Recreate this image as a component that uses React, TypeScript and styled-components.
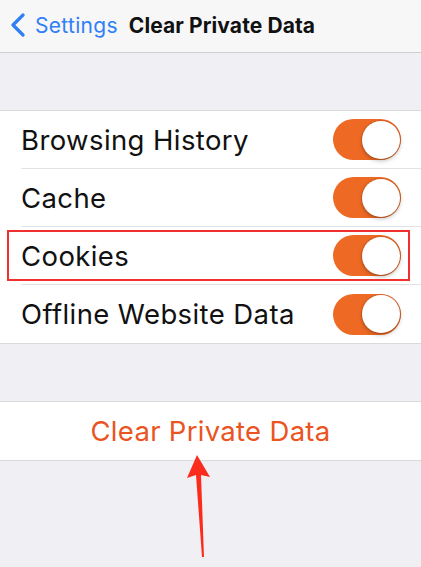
import styled, { createGlobalStyle } from "styled-components";

const GlobalStyle = createGlobalStyle`
  html, body {
    margin: 0;
    padding: 0;
    background: #efeff4;
  }
  body {
    font-family: Inter, "Liberation Sans", Arial, sans-serif;
    -webkit-font-smoothing: antialiased;
  }
`;

const Page = styled.div`
  position: relative;
  width: 421px;
  height: 567px;
  overflow: hidden;
  display: flex;
  flex-direction: column;
  background: #efeff4;
`;

const NavBar = styled.div`
  height: 53px;
  box-sizing: border-box;
  display: flex;
  align-items: center;
  gap: 11px;
  padding: 0 0 2px 10px;
  background: #f7f7f8;
  border-bottom: 1px solid #cfcfd3;
`;

const BackLink = styled.div`
  display: flex;
  align-items: center;
  gap: 9px;
  color: #2f7ff6;
  font-size: 21px;
  letter-spacing: 0.3px;
`;

const Title = styled.div`
  color: #111;
  font-size: 21px;
  font-weight: 700;
  letter-spacing: 0.1px;
`;

const Spacer = styled.div`
  height: 57px;
`;

const Group = styled.div`
  background: #fff;
  border-top: 1px solid #dadadd;
  border-bottom: 1px solid #dadadd;
`;

const Row = styled.div<{ $last?: boolean; $marked?: boolean }>`
  position: relative;
  height: 58px;
  box-sizing: border-box;
  margin-left: 21px;
  padding-right: 20px;
  display: flex;
  align-items: center;
  justify-content: space-between;
  border-bottom: ${(p) => (p.$last ? "none" : "1px solid #e2e2e5")};
  &::after {
    content: "";
    display: ${(p) => (p.$marked ? "block" : "none")};
    position: absolute;
    left: -14px;
    right: 11px;
    top: 3px;
    bottom: 3px;
    border: 2px solid #f0302f;
  }
`;

const Label = styled.span`
  color: #111;
  font-size: 27.5px;
  letter-spacing: 0.4px;
`;

const Switch = styled.div`
  width: 68px;
  height: 41px;
  border-radius: 21px;
  background: #ee6a24;
  display: flex;
  align-items: center;
  justify-content: flex-end;
  padding: 0 1px;
  box-sizing: border-box;
`;

const Knob = styled.div`
  width: 38px;
  height: 38px;
  border-radius: 50%;
  background: #fff;
  box-shadow: 0 2px 4px rgba(0, 0, 0, 0.25), 0 0 0 1px rgba(200, 90, 30, 0.5);
`;

const ActionRow = styled.div`
  height: 58px;
  display: flex;
  align-items: center;
  justify-content: center;
  color: #ea541f;
  font-size: 27.5px;
  letter-spacing: 0.3px;
`;

const ArrowMark = styled.svg`
  position: absolute;
  left: 0;
  top: 0;
  pointer-events: none;
`;

const items = ["Browsing History", "Cache", "Cookies", "Offline Website Data"];

export default function App() {
  return (
    <>
      <GlobalStyle />
      <Page>
        <NavBar>
          <BackLink>
            <svg width="16" height="24" viewBox="0 0 16 24">
              <path
                d="M13 2 L3 12 L13 22"
                fill="none"
                stroke="#2f7ff6"
                strokeWidth="3.2"
                strokeLinecap="round"
                strokeLinejoin="round"
              />
            </svg>
            Settings
          </BackLink>
          <Title>Clear Private Data</Title>
        </NavBar>
        <Spacer />
        <Group>
          {items.map((name, i) => (
            <Row key={name} $last={i === items.length - 1} $marked={name === "Cookies"}>
              <Label>{name}</Label>
              <Switch>
                <Knob />
              </Switch>
            </Row>
          ))}
        </Group>
        <Spacer />
        <Group>
          <ActionRow>Clear Private Data</ActionRow>
        </Group>
        <ArrowMark width="421" height="567" viewBox="0 0 421 567">
          <polygon
            points="197,455 210,477 201,475 204,557 202,557 196,475 187,478"
            fill="#fc2c1c"
          />
        </ArrowMark>
      </Page>
    </>
  );
}
